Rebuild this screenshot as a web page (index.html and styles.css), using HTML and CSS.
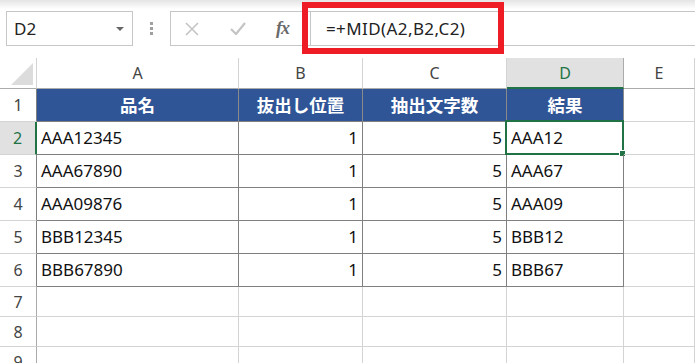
FILE: index.html
```html
<!DOCTYPE html>
<html lang="ja">
<head>
    <meta charset="UTF-8">
    <title>MID関数</title>
    <link rel="stylesheet" href="styles.css">
</head>
<body>
    <div class="toolbar">
        <div class="name-box">
            <span class="name-text">D2</span>
            <span class="name-arrow"></span>
        </div>
        <div class="grip"><i></i><i></i><i></i></div>
        <div class="formula-bar">
            <div class="formula-buttons">
                <svg class="btn-icon" width="14" height="14" viewBox="0 0 14 14">
                    <path d="M1 1 L13 13 M13 1 L1 13" stroke="#c4c4c4" stroke-width="1.6" fill="none"/>
                </svg>
                <svg class="btn-icon" width="16" height="13" viewBox="0 0 16 13">
                    <path d="M1 7 L6 12 L15 1" stroke="#c4c4c4" stroke-width="2.2" fill="none"/>
                </svg>
                <span class="fx">fx</span>
            </div>
            <div class="formula-input">=+MID(A2,B2,C2)</div>
            <div class="highlight"></div>
        </div>
    </div>

    <div class="sheet">
        <!-- 列見出し -->
        <div class="corner"><span class="corner-tri"></span></div>
        <div class="col-head">A</div>
        <div class="col-head">B</div>
        <div class="col-head">C</div>
        <div class="col-head selected">D</div>
        <div class="col-head">E</div>

        <!-- 1行目 -->
        <div class="row-head in-table">1</div>
        <div class="cell th">品名</div>
        <div class="cell th">抜出し位置</div>
        <div class="cell th">抽出文字数</div>
        <div class="cell th">結果</div>
        <div class="cell"></div>

        <div class="row-head in-table selected">2</div>
        <div class="cell td">AAA12345</div>
        <div class="cell td num">1</div>
        <div class="cell td num">5</div>
        <div class="cell td active">AAA12<span class="selection"><span class="handle"></span></span></div>
        <div class="cell"></div>

        <div class="row-head in-table">3</div>
        <div class="cell td">AAA67890</div>
        <div class="cell td num">1</div>
        <div class="cell td num">5</div>
        <div class="cell td">AAA67</div>
        <div class="cell"></div>

        <div class="row-head in-table">4</div>
        <div class="cell td">AAA09876</div>
        <div class="cell td num">1</div>
        <div class="cell td num">5</div>
        <div class="cell td">AAA09</div>
        <div class="cell"></div>

        <div class="row-head in-table">5</div>
        <div class="cell td">BBB12345</div>
        <div class="cell td num">1</div>
        <div class="cell td num">5</div>
        <div class="cell td">BBB12</div>
        <div class="cell"></div>

        <div class="row-head in-table">6</div>
        <div class="cell td">BBB67890</div>
        <div class="cell td num">1</div>
        <div class="cell td num">5</div>
        <div class="cell td">BBB67</div>
        <div class="cell"></div>

        <div class="row-head short">7</div>
        <div class="cell short"></div>
        <div class="cell short"></div>
        <div class="cell short"></div>
        <div class="cell short"></div>
        <div class="cell short"></div>

        <div class="row-head short">8</div>
        <div class="cell short"></div>
        <div class="cell short"></div>
        <div class="cell short"></div>
        <div class="cell short"></div>
        <div class="cell short"></div>

        <div class="row-head short">9</div>
        <div class="cell short"></div>
        <div class="cell short"></div>
        <div class="cell short"></div>
        <div class="cell short"></div>
        <div class="cell short"></div>
    </div>
</body>
</html>
```

FILE: styles.css
```css
* {
    box-sizing: border-box;
}

body {
    margin: 0;
    width: 695px;
    height: 363px;
    overflow: hidden;
    background: #fff;
    font-family: "Noto Sans", "Noto Sans CJK JP", sans-serif;
    color: #000;
}

/* 数式バー */
.toolbar {
    display: flex;
    align-items: flex-start;
    height: 58px;
    padding: 11px 0 0 6px;
    background: linear-gradient(#e4e4e4 0px, #ffffff 9px);
}

.name-box {
    position: relative;
    width: 127px;
    height: 35px;
    border: 1px solid #c6c6c6;
    background: #fff;
    display: flex;
    align-items: center;
    padding-left: 7px;
}

.name-text {
    font-size: 17px;
    color: #222;
}

.name-arrow {
    position: absolute;
    right: 8px;
    top: 15px;
    border-left: 4px solid transparent;
    border-right: 4px solid transparent;
    border-top: 4px solid #666;
}

.grip {
    width: 37px;
    height: 35px;
    display: flex;
    flex-direction: column;
    align-items: center;
    justify-content: center;
    gap: 2px;
}

.grip i {
    width: 3px;
    height: 3px;
    background: #a0a0a0;
}

.formula-bar {
    position: relative;
    flex: 1;
    height: 35px;
    display: flex;
    border: 1px solid #c6c6c6;
    border-right: none;
    background: #fff;
}

.formula-buttons {
    width: 139px;
    display: flex;
    align-items: center;
    padding-left: 14px;
}

.btn-icon {
    margin-right: 31px;
}

.btn-icon + .btn-icon {
    margin-right: 30px;
}

.fx {
    font-family: "Liberation Serif", "DejaVu Serif", serif;
    font-style: italic;
    font-weight: bold;
    font-size: 18px;
    color: #6a6a6a;
    letter-spacing: -1px;
}

.formula-input {
    flex: 1;
    border-left: 1px solid #c6c6c6;
    padding-left: 15px;
    font-size: 17px;
    line-height: 33px;
    color: #222;
    letter-spacing: 0.4px;
}

.highlight {
    position: absolute;
    left: 131px;
    top: -10px;
    width: 202px;
    height: 52px;
    border: 6px solid #ee1c25;
}

/* シート */
.sheet {
    display: grid;
    grid-template-columns: 37px 202px 124px 144px 117px 1fr;
    grid-template-rows: 31px repeat(6, 33px) repeat(3, 30px);
}

.corner {
    position: relative;
    border-right: 1px solid #d4d4d4;
    border-bottom: 1px solid #ababab;
}

.corner-tri {
    position: absolute;
    right: 3px;
    bottom: 3px;
    border-left: 22px solid transparent;
    border-bottom: 22px solid #dcdcdc;
}

.col-head {
    border-right: 1px solid #d4d4d4;
    border-bottom: 1px solid #ababab;
    text-align: center;
    font-size: 16px;
    line-height: 30px;
    color: #444;
}

.col-head.selected {
    background: #e1e1e1;
    color: #217346;
    border-right-color: #ababab;
    border-bottom: 2px solid #217346;
}

.row-head {
    border-right: 1px solid #ababab;
    border-bottom: 1px solid #d4d4d4;
    text-align: center;
    font-size: 16px;
    line-height: 33px;
    color: #444;
}

.row-head.in-table {
    border-right-color: #808080;
}

.row-head.selected {
    background: #e1e1e1;
    color: #217346;
    border-right: 2px solid #217346;
}

.row-head.short {
    line-height: 30px;
}

.cell {
    position: relative;
    border-right: 1px solid #d4d4d4;
    border-bottom: 1px solid #d4d4d4;
    font-size: 17px;
    line-height: 32px;
    padding: 0 4px;
    white-space: nowrap;
    color: #111;
}

.cell.th {
    font-family: "Noto Sans CJK JP", sans-serif;
    font-size: 17.5px;
    background: #2f5597;
    color: #fff;
    font-weight: bold;
    text-align: center;
    border-right-color: #8a8a8a;
    border-bottom-color: #808080;
}

.cell.td {
    border-right-color: #808080;
    border-bottom-color: #808080;
}

.cell.num {
    text-align: right;
}

.selection {
    position: absolute;
    left: -2px;
    top: -2px;
    right: -1px;
    bottom: -1px;
    border: 2px solid #217346;
}

.handle {
    position: absolute;
    right: -4px;
    bottom: -4px;
    width: 7px;
    height: 7px;
    background: #217346;
    border: 1px solid #fff;
}
```
